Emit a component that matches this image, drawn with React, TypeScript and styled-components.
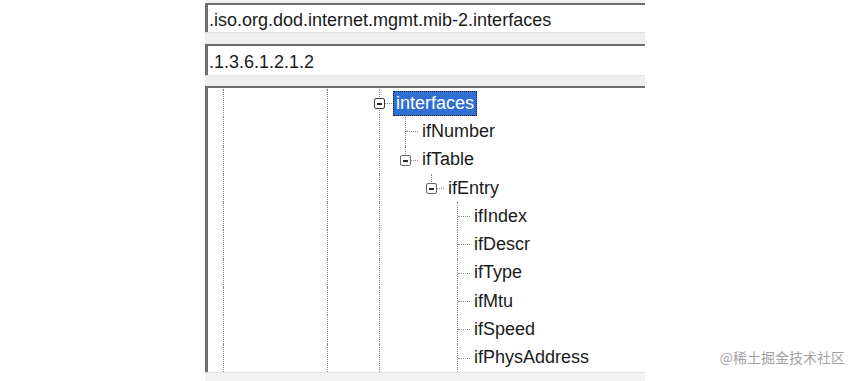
import React from "react";
import styled, { createGlobalStyle } from "styled-components";

const GlobalStyle = createGlobalStyle`
  html, body {
    margin: 0;
    padding: 0;
    background: #ffffff;
  }
`;

type GuideKind = "blank" | "pass" | "tee" | "end";

interface TreeRow {
  guides: GuideKind[];
  own: GuideKind;
  expander?: boolean;
  label: string;
  selected?: boolean;
}

// ancestor guide columns: 0 and 4 keep running, 6 is mib-2's sibling line
const base: GuideKind[] = ["pass", "blank", "blank", "blank", "pass", "blank"];
const leaf: GuideKind[] = [...base, "pass", "blank", "blank"];

const rows: TreeRow[] = [
  { guides: base, own: "tee", expander: true, label: "interfaces", selected: true },
  { guides: [...base, "pass"], own: "tee", label: "ifNumber" },
  { guides: [...base, "pass"], own: "end", expander: true, label: "ifTable" },
  { guides: [...base, "pass", "blank"], own: "end", expander: true, label: "ifEntry" },
  { guides: leaf, own: "tee", label: "ifIndex" },
  { guides: leaf, own: "tee", label: "ifDescr" },
  { guides: leaf, own: "tee", label: "ifType" },
  { guides: leaf, own: "tee", label: "ifMtu" },
  { guides: leaf, own: "tee", label: "ifSpeed" },
  { guides: leaf, own: "tee", label: "ifPhysAddress" },
];

const Page = styled.div`
  position: relative;
  width: 850px;
  height: 381px;
  overflow: hidden;
  background: #ffffff;
`;

const Panel = styled.div`
  margin-left: 205px;
  width: 440px;
  height: 381px;
  padding-top: 3px;
  box-sizing: border-box;
  display: flex;
  flex-direction: column;
  background: #efefef;
`;

const Field = styled.div<{ $height: number }>`
  height: ${({ $height }) => $height}px;
  border-top: 2px solid #6e6e6e;
  border-left: 3px solid #6e6e6e;
  background: #ffffff;
  padding-left: 1px;
  font-family: "Liberation Sans", Arial, sans-serif;
  font-size: 18px;
  line-height: ${({ $height }) => $height + 3}px;
  color: #1a1a1a;
  white-space: nowrap;
  overflow: hidden;
`;

const Gap = styled.div<{ $height: number }>`
  height: ${({ $height }) => $height}px;
  background: #efefef;
  border-top: 1px dotted #d6d6d6;
  box-sizing: border-box;
`;

const Tree = styled.div`
  flex: 0 0 286px;
  box-sizing: border-box;
  border-top: 2px solid #6e6e6e;
  border-left: 3px solid #6e6e6e;
  background: #ffffff;
  padding: 1px 0 0 2px;
  overflow: hidden;
`;

const Row = styled.div`
  display: flex;
  align-items: center;
  height: 28.3px;
`;

const Guide = styled.span<{ $kind: GuideKind }>`
  position: relative;
  flex: 0 0 26px;
  align-self: stretch;

  &::before {
    content: "";
    display: ${({ $kind }) => ($kind === "blank" ? "none" : "block")};
    position: absolute;
    left: 13px;
    top: 0;
    height: ${({ $kind }) => ($kind === "end" ? "50%" : "100%")};
    border-left: 1px dotted #8a8a8a;
  }

  &::after {
    content: "";
    display: ${({ $kind }) => ($kind === "tee" || $kind === "end" ? "block" : "none")};
    position: absolute;
    left: 14px;
    right: 0;
    top: 14px;
    border-top: 1px dotted #8a8a8a;
  }
`;

const Expander = styled.span<{ $strong?: boolean }>`
  position: absolute;
  left: 8px;
  top: 9px;
  width: 11px;
  height: 11px;
  box-sizing: border-box;
  border: 1px solid ${({ $strong }) => ($strong ? "#3c3c3c" : "#6a6a6a")};
  border-radius: 2px;
  background: #ffffff;
  z-index: 1;

  &::after {
    content: "";
    position: absolute;
    left: 2px;
    right: 2px;
    top: 4px;
    height: 2px;
    background: #2a2a2a;
  }
`;

const Label = styled.span<{ $selected?: boolean }>`
  margin-left: 1px;
  padding: 1px 2px 2px;
  border: 1px dotted ${({ $selected }) => ($selected ? "#1a1a1a" : "transparent")};
  background: ${({ $selected }) => ($selected ? "#2f6fd4" : "transparent")};
  color: ${({ $selected }) => ($selected ? "#ffffff" : "#1a1a1a")};
  font-family: "Liberation Sans", Arial, sans-serif;
  font-size: 18px;
  line-height: 20px;
  white-space: nowrap;
`;

const BottomStrip = styled.div`
  flex: 1;
  background: #f2f2f2;
  border-top: 1px solid #e2e2e2;
`;

const Watermark = styled.div`
  position: absolute;
  right: 5px;
  bottom: 14px;
  font-family: "Noto Sans CJK SC", "Noto Sans", sans-serif;
  font-size: 14px;
  color: #a3a3a3;
`;

const App: React.FC = () => (
  <Page>
    <GlobalStyle />
    <Panel>
      <Field $height={27}>.iso.org.dod.internet.mgmt.mib-2.interfaces</Field>
      <Gap $height={12} />
      <Field $height={29}>.1.3.6.1.2.1.2</Field>
      <Gap $height={11} />
      <Tree>
        {rows.map((row) => (
          <Row key={row.label}>
            {row.guides.map((g, i) => (
              <Guide key={i} $kind={g} />
            ))}
            <Guide $kind={row.own}>
              {row.expander && <Expander $strong={row.selected} />}
            </Guide>
            <Label $selected={row.selected}>{row.label}</Label>
          </Row>
        ))}
      </Tree>
      <BottomStrip />
    </Panel>
    <Watermark>@稀土掘金技术社区</Watermark>
  </Page>
);

export default App;
